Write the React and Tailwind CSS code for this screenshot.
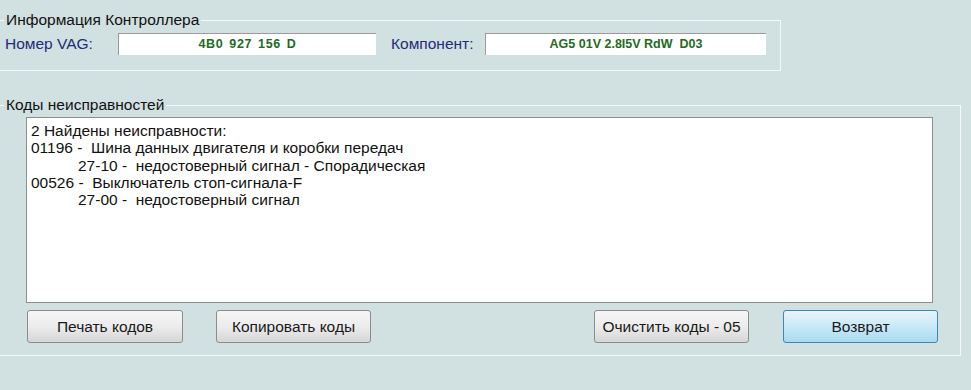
import React from "react";

/* =====================================================
   VAG-COM : КОДЫ НЕИСПРАВНОСТЕЙ
===================================================== */

const faults = [
  { text: "2 Найдены неисправности:", indent: false },
  { text: "01196 -  Шина данных двигателя и коробки передач", indent: false },
  { text: "27-10 -  недостоверный сигнал - Спорадическая", indent: true },
  { text: "00526 -  Выключатель стоп-сигнала-F", indent: false },
  { text: "27-00 -  недостоверный сигнал", indent: true },
];

function Field({ value, width, spacing }) {
  return (
    <div
      className={`h-[22px] ${width} ${spacing} bg-white border-t border-l border-t-[#9a9a9a] border-l-[#9a9a9a] flex items-center justify-center whitespace-pre text-[12.5px] font-bold text-[#1f6b22]`}
    >
      {value}
    </div>
  );
}

function Button({ children, width, primary = false }) {
  return (
    <button
      className={
        primary
          ? `h-[33px] ${width} rounded-[3px] border border-[#3d86b8] bg-gradient-to-b from-[#e6f5fc] via-[#c9e9f8] to-[#a9daf0] text-[15.5px] text-[#1a1a1a]`
          : `h-[33px] ${width} rounded-[3px] border border-[#8c8c8c] bg-gradient-to-b from-[#f6f6f6] via-[#ececec] to-[#d6d6d6] text-[15.5px] text-[#1a1a1a]`
      }
    >
      {children}
    </button>
  );
}

export default function App() {
  return (
    <div
      className="w-[971px] h-[390px] overflow-hidden bg-[#d1e0e1] text-[#111]"
      style={{ fontFamily: '"Liberation Sans", Arial, sans-serif' }}
    >
      {/* CONTROLLER INFO */}

      <div className="relative mt-[20px] w-[781px] h-[51px] border border-l-0 border-[#f4f8f8]">
        <span className="absolute left-[4px] -top-[11px] px-[2px] bg-[#d1e0e1] text-[15.5px] leading-[20px]">
          Информация Контроллера
        </span>

        <div className="flex items-center mt-[11px]">
          <span className="ml-[5px] w-[113px] text-[15.5px] text-[#1f2b78]">
            Номер VAG:
          </span>
          <Field
            value="4B0 927 156 D"
            width="w-[258px]"
            spacing="tracking-[0.6px] [word-spacing:2px]"
          />
          <span className="ml-[15px] w-[94px] text-[15.5px] text-[#1f2b78]">
            Компонент:
          </span>
          <Field
            value="AG5 01V 2.8I5V RdW  D03"
            width="w-[281px]"
            spacing="tracking-[0px]"
          />
        </div>
      </div>

      {/* FAULT CODES */}

      <div className="relative mt-[34px] w-[961px] h-[251px] border border-l-0 border-[#f4f8f8]">
        <span className="absolute left-[4px] -top-[11px] px-[2px] bg-[#d1e0e1] text-[15.5px] leading-[20px]">
          Коды неисправностей
        </span>

        <div className="ml-[26px] mt-[11px] w-[907px] h-[186px] bg-white border border-[#8f8f8f] pt-[4px] pl-[4px]">
          {faults.map((line, i) => (
            <div
              key={i}
              className={`text-[15.5px] leading-[17.3px] whitespace-pre ${line.indent ? "pl-[47px]" : ""}`}
            >
              {line.text}
            </div>
          ))}
        </div>

        <div className="flex items-center ml-[27px] mt-[7px]">
          <Button width="w-[156px]">Печать кодов</Button>
          <div className="w-[33px]" />
          <Button width="w-[155px]">Копировать коды</Button>
          <div className="flex-1" />
          <Button width="w-[155px]">Очистить коды - 05</Button>
          <div className="w-[34px]" />
          <Button width="w-[155px]" primary>
            Возврат
          </Button>
          <div className="w-[22px]" />
        </div>
      </div>
    </div>
  );
}
